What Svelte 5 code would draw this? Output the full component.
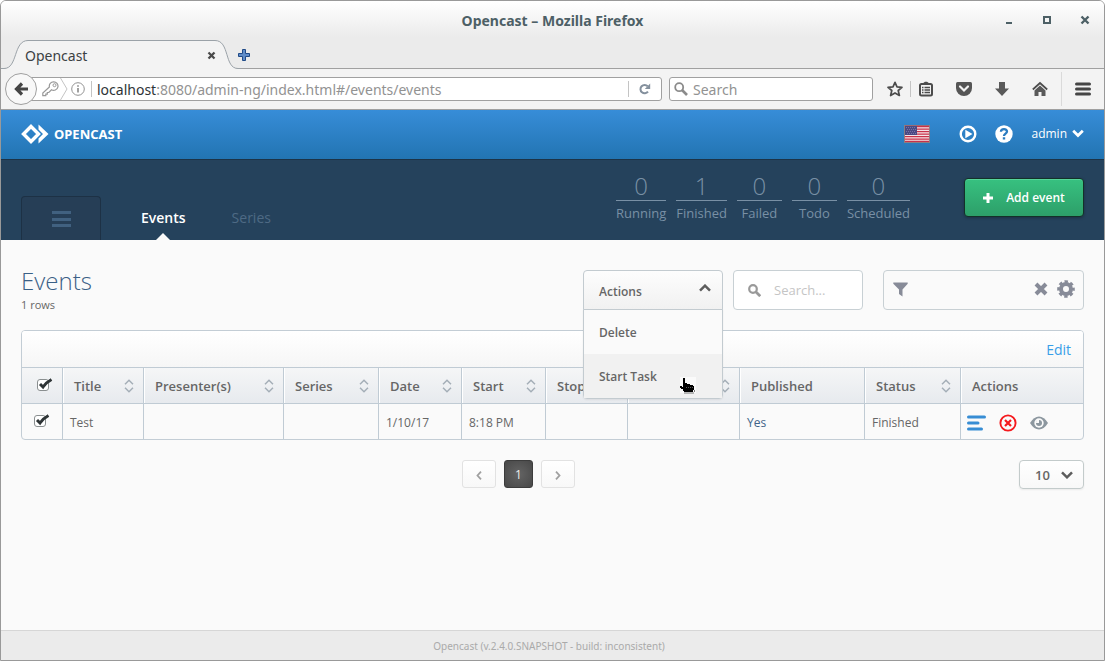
<script>
  const counters = [
    ['0', 'Running'],
    ['1', 'Finished'],
    ['0', 'Failed'],
    ['0', 'Todo'],
    ['0', 'Scheduled']
  ];
  const columns = [
    { label: 'Title', width: 81, sort: true },
    { label: 'Presenter(s)', width: 140, sort: true },
    { label: 'Series', width: 95, sort: true },
    { label: 'Date', width: 83, sort: true },
    { label: 'Start', width: 84, sort: true },
    { label: 'Stop', width: 82, sort: true },
    { label: '', width: 112, sort: true },
    { label: 'Published', width: 125, sort: false },
    { label: 'Status', width: 96, sort: true },
    { label: 'Actions', width: 123, sort: false }
  ];
  let allChecked = $state(true);
  let menuOpen = $state(true);
</script>

{#snippet tick(name)}
  <label class="tick">
    <input type="checkbox" bind:checked={allChecked} aria-label={name} />
    {#if allChecked}
      <svg width="16" height="13" viewBox="0 0 16 13"><path d="M3 6 6 9 Q9 4.500 14.500 1.500" fill="none" stroke="#2e3436" stroke-width="3" /></svg>
    {/if}
  </label>
{/snippet}

<div class="window">
  <header class="titlebar">
    <span class="caption">Opencast – Mozilla Firefox</span>
    <div class="wm">
      <button aria-label="Minimize"><svg width="12" height="12"><path d="M3 8h6v2H3z" fill="#4d6066" /></svg></button>
      <button aria-label="Maximize"><svg width="12" height="12"><path d="M3 3h6v6H3z" fill="none" stroke="#4d6066" stroke-width="2" /></svg></button>
      <button aria-label="Close window"><svg width="12" height="12"><path d="M2.500 2.500l7 7M9.500 2.500l-7 7" stroke="#4d6066" stroke-width="2.400" /></svg></button>
    </div>
  </header>

  <div class="tabs">
    <div class="tab">
      <svg class="tabshape" width="240" height="30" viewBox="0 0 240 30"><path d="M0 28.500H3C17 28.500 12 .5 27 .5H214C229 .5 223 28.500 237 28.500H240V30H0z" fill="#f3f3f3" stroke="#9ba2a8" /></svg>
      <div class="tabcontent">
        <span>Opencast</span>
        <button aria-label="Close tab"><svg width="9" height="9"><path d="M1.500 1.500l6 6M7.500 1.500l-6 6" stroke="#4a4a4a" stroke-width="2.300" /></svg></button>
      </div>
    </div>
    <button class="newtab" aria-label="New tab"><svg width="12" height="12" viewBox="0 0 12 12"><path d="M4.500.5h3v4h4v3h-4v4h-3v-4h-4v-3h4z" fill="#5f8cc8" stroke="#204a87" /></svg></button>
  </div>

  <div class="toolbar">
    <button class="back" aria-label="Back"><svg width="16" height="16" viewBox="0 0 16 16"><path d="M15 8H4M9 2.500 3.500 8 9 13.500" fill="none" stroke="#454545" stroke-width="3.200" /></svg></button>
    <div class="urlbar">
      <svg class="key" width="17" height="16" viewBox="0 0 17 16"><path d="M11.500.8a4.300 4.300 0 1 1-2 8L6.800 11.500H5.300v1.700H3.800v1.500H.8v-2.600L7.400 6A4.300 4.300 0 0 1 11.500.8z" fill="none" stroke="#999" stroke-width="1.200" /><circle cx="12.500" cy="4.200" r="1.500" fill="none" stroke="#999" /></svg>
      <svg class="chev" width="8" height="22" viewBox="0 0 8 22"><path d="M.5 0 7 11 .5 22" fill="none" stroke="#c4c4c4" /></svg>
      <svg class="info" width="14" height="14" viewBox="0 0 14 14"><circle cx="7" cy="7" r="6.300" fill="none" stroke="#929292" /><path d="M7 6v4.500M7 3.300v1.500" stroke="#808080" stroke-width="1.500" /></svg>
      <span class="rule"></span>
      <span class="url"><b>localhost</b>:8080/admin-ng/index.html#/events/events</span>
      <span class="rule"></span>
      <button class="reload" aria-label="Reload"><svg width="12" height="12" viewBox="0 0 12 12"><path d="M9 8.700A4.200 4.200 0 1 1 8.700 3.200" fill="none" stroke="#84909d" stroke-width="2" /><path d="M11.200.5V6H5.800z" fill="#84909d" /></svg></button>
    </div>
    <label class="searchbar">
      <svg width="14" height="14" viewBox="0 0 14 14"><circle cx="5.200" cy="5.200" r="4" fill="none" stroke="#8b8b8b" stroke-width="1.800" /><path d="M8 8l5 5" stroke="#8b8b8b" stroke-width="2.600" /></svg>
      <input type="text" placeholder="Search" aria-label="Web search" />
    </label>
    <div class="tools">
      <button aria-label="Bookmark"><svg width="16" height="16" viewBox="0 0 16 16"><path d="M8 1.300l2 4.600 5 .4-3.800 3.200 1.200 5L8 11.900l-4.400 2.600 1.200-5L1 6.300l5-.4z" fill="none" stroke="#4c4c4c" stroke-width="1.700" stroke-linejoin="round" /></svg></button>
      <span class="rule"></span>
      <button aria-label="Bookmarks list"><svg width="14" height="16" viewBox="0 0 14 16"><path d="M4.500 3V1.800L6 .8h2l1.500 1V3" fill="#4c4c4c" /><rect x="1" y="3" width="12" height="11.500" rx="1.500" fill="none" stroke="#4c4c4c" stroke-width="2" /><path d="M3 6.500h1.500M3 9h1.500M3 11.500h1.500M5.500 6.500h5.500M5.500 9h5.500M5.500 11.500h5.500" stroke="#4c4c4c" stroke-width="1.400" /></svg></button>
      <button aria-label="Pocket"><svg width="16" height="16" viewBox="0 0 16 16"><path d="M1.500 1h13q1.500 0 1.500 1.500V7a8 8 0 0 1-16 0V2.500Q0 1 1.500 1z" fill="#555" /><path d="M4 5.500l4 4 4-4" fill="none" stroke="#f3f3f3" stroke-width="2.200" stroke-linecap="round" /></svg></button>
      <button aria-label="Downloads"><svg width="16" height="16" viewBox="0 0 16 16"><path d="M5 1h6v6.500h4L8 15 1 7.500h4z" fill="#595959" /></svg></button>
      <button aria-label="Home"><svg width="16" height="16" viewBox="0 0 16 16"><path d="M8 4.500 13.500 9.500V15H9.500V11H6.500V15H2.500V9.500z" fill="#595959" /><path d="M.8 8.500 8 2l7.200 6.500" fill="none" stroke="#4c4c4c" stroke-width="1.700" /></svg></button>
      <span class="rule tall"></span>
      <button aria-label="Menu"><svg width="16" height="14" viewBox="0 0 16 14"><path d="M1.500 2h13M1.500 7h13M1.500 12h13" stroke="#454545" stroke-width="3" stroke-linecap="round" /></svg></button>
    </div>
  </div>

  <div class="app">
    <header class="brandbar">
      <a class="logo" href="#/">
        <svg width="28" height="20" viewBox="0 0 28 20"><path d="M10 2.500 17.500 10 10 17.500 2.500 10z" fill="none" stroke="#fff" stroke-width="3.400" /><path d="M17.500.5 27.500 10 17.500 19.500V14.500L22 10 17.500 5.500z" fill="#fff" /></svg>
        <span>OPENCAST</span>
      </a>
      <nav class="user">
        <button class="lang" aria-label="Language"><svg width="26" height="18" viewBox="0 0 26 18"><rect width="26" height="18" fill="#8d7d82" /><path fill="#f6e4e6" d="M1 1h24v16H1z" /><path d="M1 1.500h24M1 4.200h24M1 6.700h24M1 9.200h24M1 11.700h24M1 14.100h24M1 16.400h24" stroke="#c8324a" stroke-width="1.300" /><path fill="#4b4a83" d="M1 1h12v9H1z" /><path d="M2 2.500h10M3 4.500h9M2 6.500h10M3 8.500h9" stroke="#7473a5" stroke-dasharray="1 1" /></svg></button>
        <button class="play" aria-label="Player"><svg width="18" height="18" viewBox="0 0 18 18"><circle cx="9" cy="9" r="7.300" fill="none" stroke="#fff" stroke-width="2.400" /><path d="M6.300 4.700 13.500 9 6.300 13.300z" fill="#fff" /></svg></button>
        <button class="help" aria-label="Help"><svg width="18" height="18" viewBox="0 0 18 18"><circle cx="9" cy="9" r="8.700" fill="#fff" /><path d="M5.900 6.800C6 3.300 12 3.300 12 6.600 12 8.700 9 8.600 9 11" fill="none" stroke="#2b7cc0" stroke-width="2.300" /><path d="M7.800 12.200h2.400v2.300H7.800z" fill="#2b7cc0" /></svg></button>
        <button class="admin">admin <svg width="12" height="9" viewBox="0 0 12 9"><path d="M1.200 1.700 6 6.500l4.800-4.800" fill="none" stroke="#fff" stroke-width="2.700" /></svg></button>
      </nav>
    </header>

    <div class="navbar">
      <button class="burger" aria-label="Main menu"><svg width="19" height="16"><path d="M0 1.500h19M0 8.500h19M0 14.500h19" stroke="#416180" stroke-width="3" /></svg></button>
      <nav class="sections">
        <a class="active" href="#/events">Events</a>
        <a href="#/series">Series</a>
      </nav>
      <div class="counters">
        {#each counters as [count, label]}
          <a class="counter" href="#/stats"><span class="num">{count}</span><span class="cap">{label}</span></a>
        {/each}
      </div>
      <button class="add"><svg width="10" height="10"><path d="M5 0v10M0 5h10" stroke="#fff" stroke-width="3" /></svg>Add event</button>
    </div>

    <main>
      <div class="head">
        <div class="heading">
          <h1>Events</h1>
          <p>1 rows</p>
        </div>
        <div class="actions">
          <button class="actbtn" aria-expanded={menuOpen} onclick={() => (menuOpen = !menuOpen)}>Actions <svg width="12" height="8" viewBox="0 0 12 8"><path d="M1 6.700 6 1.700l5 5" fill="none" stroke="#5d5d5d" stroke-width="2.500" /></svg></button>
          {#if menuOpen}
            <div class="menu">
              <button>Delete</button>
              <button class="hover">Start Task</button>
              <svg class="pointer" width="18" height="18" viewBox="0 0 18 18"><path d="M1 1h16v16H1z" fill="#fafafa" /><path d="M4 2h2v5h2v1h3v1h3v1h1v4h-1v2H5v-1H4v-2H2v-1H1v-2h2v1h1z" fill="#000" /><path d="M5 17h10M15.500 14v2" stroke="#777" /><path d="M7 11.500h1M9 11.500h1M11 11.500h1M13 11.500h1" stroke="#555" /></svg>
            </div>
          {/if}
        </div>
        <label class="search">
          <svg width="13" height="13" viewBox="0 0 13 13"><circle cx="5" cy="5" r="3.800" fill="none" stroke="#999" stroke-width="2.200" /><path d="M8 8l4.200 4.200" stroke="#999" stroke-width="2.700" /></svg>
          <input type="text" placeholder="Search..." aria-label="Search events" />
        </label>
        <div class="filter">
          <button aria-label="Add filter"><svg width="15" height="15" viewBox="0 0 15 15"><path d="M.3.5h14.400v1.300L9.500 7.500V14.600L6 12V7.500L.3 1.800z" fill="#878b98" /></svg></button>
          <span class="grow"></span>
          <button aria-label="Clear filters"><svg width="14" height="14" viewBox="0 0 14 14"><path d="M2 2l10 10M12 2 2 12" stroke="#878b98" stroke-width="4" /></svg></button>
          <button aria-label="Filter settings"><svg width="18" height="18" viewBox="0 0 18 18"><circle cx="9" cy="9" r="5" fill="none" stroke="#878b98" stroke-width="4" /><circle cx="9" cy="9" r="7.300" fill="none" stroke="#878b98" stroke-width="3" stroke-dasharray="3.300 2.434" stroke-dashoffset="1.650" /></svg></button>
        </div>
      </div>

      <div class="grid">
        <div class="gridtop"><a href="#/edit">Edit</a></div>
        <table>
          <colgroup>
            <col style="width: 40px" />
            {#each columns as c}<col style="width: {c.width}px" />{/each}
          </colgroup>
          <thead>
            <tr>
              <th class="first">{@render tick('Select all')}</th>
              {#each columns as c}
                <th><div class="th"><span>{c.label}</span>{#if c.sort}<svg width="10" height="14" viewBox="0 0 10 14"><path d="M1 5.300 5 1.300l4 4M1 8.700l4 4 4-4" fill="none" stroke="#a5afb8" stroke-width="1.500" /></svg>{/if}</div></th>
              {/each}
            </tr>
          </thead>
          <tbody>
            <tr>
              <td class="first">{@render tick('Select Test')}</td>
              <td>Test</td><td></td><td></td><td>1/10/17</td><td>8:18 PM</td><td></td><td></td>
              <td><a href="#/published">Yes</a></td>
              <td>Finished</td>
              <td>
                <div class="rowacts">
                  <button aria-label="Details"><svg width="19" height="16"><path d="M1.500 2h16M1.500 8h9.500M1.500 14h13" stroke="#378dd4" stroke-width="3" stroke-linecap="round" /></svg></button>
                  <button aria-label="Delete event"><svg width="18" height="18" viewBox="0 0 18 18"><circle cx="9" cy="9" r="7.600" fill="none" stroke="#f5191d" stroke-width="1.900" /><path d="M6 6l6 6M12 6l-6 6" stroke="#f5191d" stroke-width="2.200" /></svg></button>
                  <button aria-label="Preview"><svg width="18" height="14" viewBox="0 0 18 14"><path d="M0 7Q4 .5 9 .5T18 7Q14 13.500 9 13.500T0 7z" fill="#8c979f" /><circle cx="9" cy="7" r="4.700" fill="#fafafa" /><circle cx="9" cy="7" r="3" fill="#8c979f" /><path d="M9 7V4h-2q-1 1-1 3z" fill="#fafafa" /></svg></button>
                </div>
              </td>
            </tr>
          </tbody>
        </table>
      </div>

      <div class="pagerow">
        <nav class="pager">
          <button aria-label="Previous page"><svg width="6" height="9" viewBox="0 0 6 9"><path d="M5 .7 1.500 4.500 5 8.300" fill="none" stroke="#a0a0a0" stroke-width="1.800" /></svg></button>
          <button class="current">1</button>
          <button aria-label="Next page"><svg width="6" height="9" viewBox="0 0 6 9"><path d="M1 .7 4.500 4.500 1 8.300" fill="none" stroke="#a0a0a0" stroke-width="1.800" /></svg></button>
        </nav>
        <label class="size">
          <select aria-label="Rows per page"><option>10</option></select>
          <svg width="12" height="8" viewBox="0 0 12 8"><path d="M1 1.300 6 6.300l5-5" fill="none" stroke="#5d5d5d" stroke-width="2.500" /></svg>
        </label>
      </div>
    </main>

    <footer>Opencast (v.2.4.0.SNAPSHOT - build: inconsistent)</footer>
  </div>
</div>

<style>
  :global(body) { background: #fff; }
  .window, .window * { box-sizing: border-box; }
  .window {
    display: flex; flex-direction: column; min-height: 100vh;
    border: 1px solid #999; border-radius: 6px 6px 0 0; overflow: hidden;
    font-family: "Noto Sans", sans-serif; font-size: 14px; background: #f3f3f3;
  }
  button { display: flex; align-items: center; justify-content: center; padding: 0; border: 0; background: none; font: inherit; color: inherit; }
  a { text-decoration: none; color: inherit; }
  svg { display: block; flex: none; }
  input { min-width: 0; border: 0; outline: 0; padding: 0; background: none; font: inherit; }

  .titlebar { display: grid; grid-template-columns: 1fr auto 1fr; align-items: center; height: 39px; padding-bottom: 1px; background: linear-gradient(#fff, #ebebeb 36px); }
  .caption { grid-column: 2; font-size: 14px; font-weight: 700; color: #4d6066; }
  .wm { display: flex; justify-content: flex-end; gap: 26px; padding-right: 13px; }

  .tabs { display: flex; align-items: center; height: 29px; background: #ebebeb; box-shadow: inset 0 -1px #a0a0a0; }
  .tab { display: grid; width: 240px; margin-right: -3px; }
  .tab > * { grid-area: 1 / 1; }
  .tabshape { align-self: start; }
  .tabcontent { display: flex; align-items: center; justify-content: space-between; padding: 1px 25px 0 24px; color: #3c4143; }

  .toolbar { display: flex; align-items: center; height: 41px; padding-left: 4px; border-bottom: 1px solid #a0a0a0; background: #f3f3f3; }
  .back { position: relative; z-index: 1; width: 32px; height: 32px; border: 1px solid #a0a0a0; border-radius: 50%; background: #f8f8f8; flex: none; }
  .urlbar { display: flex; align-items: center; flex: 1; height: 24px; margin-left: -6px; padding-left: 10px; border: 1px solid #a0a0a0; border-radius: 0 3px 3px 0; background: #fff; color: #929292; }
  .chev { margin: 0 3px 0 1px; }
  .rule { width: 1px; height: 16px; background: #c4c4c4; flex: none; }
  .info { margin-right: 6px; }
  .url { flex: 1; padding-left: 5px; white-space: nowrap; overflow: hidden; }
  .url b { font-weight: 400; color: #2e3436; }
  .reload { width: 32px; }
  .searchbar { display: flex; align-items: center; gap: 5px; width: 204px; height: 24px; margin-left: 7px; padding: 0 4px; border: 1px solid #a0a0a0; border-radius: 3px; background: #fff; }
  .searchbar input::placeholder { color: #929292; }
  .tools { display: flex; align-items: center; padding: 0 13px 0 14px; }
  .tools button { width: 16px; margin-right: 22px; }
  .tools button:first-child { margin-right: 7px; }
  .tools .rule + button { margin-left: 7px; }
  .tools .tall { height: 34px; margin-left: -9px; background: #dadada; }
  .tools .tall + button { margin: 0 0 0 13px; }

  .app { display: flex; flex-direction: column; flex: 1; background: #fafafa; font-family: "Open Sans", sans-serif; font-size: 12px; color: #666; }
  .brandbar { display: flex; align-items: center; justify-content: space-between; height: 50px; padding: 0 20px 2px; border-bottom: 1px solid #1c3347; background: linear-gradient(#378dd8, #2274b2); color: #fff; }
  .logo { display: flex; align-items: center; gap: 5px; font-family: "Noto Sans", sans-serif; font-size: 13px; font-weight: 700; }
  .user { display: flex; align-items: center; }
  .play { margin-left: 29px; }
  .help { margin: 0 18px; }
  .admin { gap: 5px; font-size: 12px; }

  .navbar { display: flex; height: 80px; padding: 0 20px; background: #25425c; }
  .burger { align-self: flex-end; width: 80px; height: 44px; margin-right: 40px; border: 1px solid #1d3145; border-bottom: 0; border-radius: 4px 4px 0 0; background: #263e56; }
  .sections { display: flex; gap: 46px; align-self: flex-end; margin-right: auto; font-size: 14px; color: #4e6a84; }
  .sections a { position: relative; height: 33px; line-height: 22px; }
  .sections .active { color: #fff; font-weight: 600; }
  .active::after { content: ""; position: absolute; left: 50%; bottom: 0; margin-left: -7px; border: 7px solid transparent; border-top: 0; border-bottom-color: #fafafa; }
  .counters { display: flex; gap: 10px; margin-right: 54px; padding-top: 11px; color: #7990a5; }
  .counter { min-width: 45px; text-align: center; }
  .num { display: block; height: 30px; line-height: 30px; border-bottom: 1px solid #7990a5; font-size: 24px; font-weight: 300; }
  .cap { display: block; line-height: 24px; font-size: 13px; }
  .add { gap: 13px; width: 120px; height: 39px; margin-top: 18px; border: 1px solid #143129; border-radius: 4px; background: linear-gradient(#37c180, #2d9f69); box-shadow: inset 0 1px #56d49a, 0 1px 3px #0004; color: #fff; font-weight: 600; }

  main { flex: 1; padding: 30px 20px 0; }
  .head { display: flex; height: 40px; }
  .heading { flex: 1; }
  h1 { margin: 0; font-size: 24px; font-weight: 300; line-height: 22px; color: #3a6086; }
  p { margin: 0; line-height: 26px; font-size: 11px; }
  .actions { position: relative; width: 140px; font-weight: 600; }
  .actbtn { width: 100%; height: 40px; padding: 2px 11px 0 15px; justify-content: space-between; border: 1px solid #c3cbd0; border-radius: 4px 4px 0 0; background: linear-gradient(#fdfdfd, #f1f1f1); }
  .actbtn svg { margin-bottom: 6px; }
  .menu { position: absolute; z-index: 2; top: 39px; left: 0; right: 0; border: 1px solid #c3cbd0; border-radius: 0 0 4px 4px; background: #fafafa; box-shadow: 0 1px 2px #0001; }
  .menu button { width: 100%; height: 44px; padding: 0 15px; justify-content: flex-start; }
  .menu .hover { background: #f1f1f1; }
  .pointer { position: absolute; left: 95px; top: 66px; }
  .search { display: flex; align-items: center; gap: 13px; width: 130px; height: 40px; margin-left: 10px; padding: 0 14px; border: 1px solid #c8d0d4; border-radius: 4px; background: #fff; font-size: 13px; }
  .search input::placeholder { color: #c5c5c5; }
  .filter { display: flex; align-items: center; gap: 9px; width: 201px; height: 40px; margin-left: 20px; padding: 0 8px 2px 9px; border: 1px solid #c8d0d4; border-radius: 4px; }
  .grow { flex: 1; }

  .grid { margin-top: 20px; border: 1px solid #c3cdd5; border-radius: 4px; overflow: hidden; }
  .gridtop { display: flex; align-items: center; justify-content: flex-end; height: 36px; padding-right: 12px; background: linear-gradient(#fff, #f6f6f6); font-size: 14px; color: #389ee8; }
  table { width: 100%; table-layout: fixed; border-collapse: separate; border-spacing: 0; }
  th, td { height: 36px; padding: 0 0 0 7px; border-top: 1px solid #c0cbd4; border-left: 1px solid #c0cbd4; text-align: left; white-space: nowrap; }
  th { padding: 0 9px 0 11px; background: linear-gradient(#f5f6f7, #e7eaee); box-shadow: inset 1px 0 #fff; font-size: 13px; font-weight: 600; }
  td { padding-top: 2px; }
  td a { color: #3f6488; }
  .first { border-left: 0; box-shadow: none; }
  th.first { padding: 0 0 3px 15px; }
  td.first { padding: 0 0 3px 12px; }
  .th { display: flex; align-items: center; justify-content: space-between; }
  .tick { display: grid; width: 16px; height: 13px; }
  .tick > * { grid-area: 1 / 1; }
  .tick input { appearance: none; align-self: end; width: 12px; height: 12px; margin: 0; border: 1px solid #8a8f90; border-radius: 3px; background: #fff; }
  .rowacts { display: flex; align-items: center; gap: 13px; margin-left: -1px; }

  .pagerow { display: flex; margin-top: 20px; }
  .pager { display: flex; flex: 1; justify-content: center; gap: 8px; padding-right: 3px; }
  .pager button { width: 34px; height: 28px; border: 1px solid #e2e2e2; border-radius: 3px; background: linear-gradient(#fff, #f8f8f8); }
  .pager svg { margin-top: 2px; }
  .pager .current { width: 29px; border-color: #3c3c3c; background: radial-gradient(#646464, #484848); color: #eee; }
  .size { display: grid; align-items: center; width: 65px; height: 29px; border: 1px solid #c3cbcb; border-radius: 4px; background: linear-gradient(#fff, #f8f8f8); box-shadow: 0 1px 2px #0001; }
  .size > * { grid-area: 1 / 1; }
  .size select { appearance: none; width: 100%; height: 100%; padding: 0 0 0 15px; border: 0; background: none; font: inherit; font-size: 13px; font-weight: 600; color: #666; }
  .size svg { justify-self: end; margin-right: 10px; pointer-events: none; }

  footer { height: 30px; padding-right: 7px; border-top: 1px solid #d6d6d6; background: #ebebeb; text-align: center; line-height: 30px; font-family: "Noto Sans", sans-serif; font-size: 10px; color: #aaa; }
</style>
